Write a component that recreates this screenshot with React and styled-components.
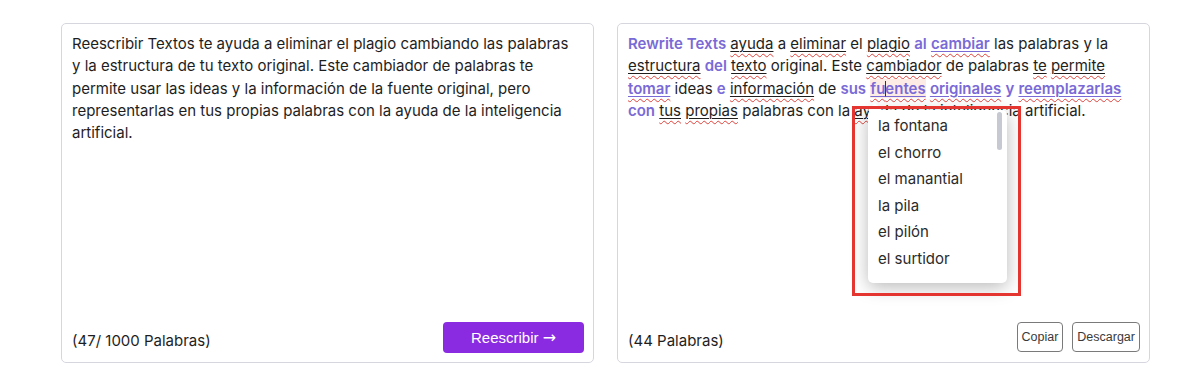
import styled, { createGlobalStyle } from "styled-components";

const GlobalStyle = createGlobalStyle`
  body {
    margin: 0;
    background: #fff;
    font-family: Inter, "Noto Sans", sans-serif;
  }
`;

const Page = styled.div`
  display: flex;
  gap: 23px;
  padding: 23px 48px 0 61px;
`;

const Panel = styled.div`
  position: relative;
  flex: 1;
  height: 340px;
  box-sizing: border-box;
  border: 1px solid #d6d6df;
  border-radius: 5px;
  display: flex;
  flex-direction: column;
  justify-content: space-between;
  padding: 9px 9px 9px 10px;
`;

const TextBody = styled.div`
  font-size: 15px;
  line-height: 22.3px;
  color: #1e1e1e;
  padding-right: 14px;
`;

const Footer = styled.div`
  display: flex;
  align-items: flex-end;
  justify-content: space-between;
`;

const Count = styled.span`
  font-size: 15px;
  line-height: 22px;
  color: #1e1e1e;
  padding-bottom: 1px;
`;

const RewriteButton = styled.button`
  width: 141px;
  height: 31px;
  border: none;
  border-radius: 4px;
  background: #8a2be2;
  color: #fff;
  font-family: "Liberation Sans", Arial, sans-serif;
  font-size: 15px;
`;

const Arrow = styled.span`
  font-family: "DejaVu Sans", sans-serif;
  font-size: 16px;
`;

const Actions = styled.div`
  display: flex;
  gap: 9px;
  padding-bottom: 1px;
`;

const GhostButton = styled.button`
  height: 30px;
  padding: 0 4px;
  background: #fff;
  border: 1px solid #7a7a7a;
  border-radius: 4px;
  color: #3a3a3a;
  font-family: "Liberation Sans", Arial, sans-serif;
  font-size: 12.5px;
`;

const Word = styled.span`
  color: ${(p) => (p.$purple ? "#7a6ad6" : "inherit")};
  font-weight: ${(p) => (p.$purple ? 600 : 400)};
  text-decoration: ${(p) => (p.$under ? "underline solid" : "none")};
  text-decoration-color: currentColor;
  text-underline-offset: 2px;
  text-decoration-thickness: 1px;
  background: ${(p) => (p.$mark ? "#fdebe6" : "transparent")};
`;

const Spell = styled.span`
  text-decoration: underline wavy #e0413a;
  text-decoration-thickness: 1px;
  text-underline-offset: 4px;
`;

const Caret = styled.span`
  display: inline-block;
  width: 1px;
  height: 16px;
  background: #333;
  vertical-align: -3px;
  margin: 0 -0.5px;
`;

const Popup = styled.div`
  position: absolute;
  left: 250px;
  top: 86px;
  width: 139px;
  height: 173px;
  background: #fff;
  border-radius: 5px;
  box-shadow: 0 4px 18px rgba(0, 0, 0, 0.28);
  padding-top: 3px;
  box-sizing: border-box;
  z-index: 2;
`;

const Notch = styled.div`
  position: absolute;
  left: 2px;
  top: -5px;
  width: 10px;
  height: 10px;
  background: #fff;
  transform: rotate(45deg);
`;

const Option = styled.div`
  position: relative;
  height: 26.5px;
  line-height: 26.5px;
  padding-left: 10px;
  font-size: 15px;
  color: #2b2b2b;
`;

const Thumb = styled.div`
  position: absolute;
  right: 5px;
  top: 2px;
  width: 5px;
  height: 38px;
  border-radius: 3px;
  background: #c6c8d2;
`;

const Annotation = styled.div`
  position: absolute;
  left: 234px;
  top: 82px;
  width: 169px;
  height: 190px;
  box-sizing: border-box;
  border: 3px solid #e53530;
  z-index: 3;
  pointer-events: none;
`;

const leftText =
  "Reescribir Textos te ayuda a eliminar el plagio cambiando las palabras y la estructura de tu texto original. Este cambiador de palabras te permite usar las ideas y la información de la fuente original, pero representarlas en tus propias palabras con la ayuda de la inteligencia artificial.";

// p = purple/bold, u = underlined, m = marked (caret)
const rightText = [
  ["Rewrite Texts", "p"], " ", ["ayuda", "u"], " a ", ["eliminar", "u"], " el ",
  ["plagio", "u"], " ", ["al", "p"], " ", ["cambiar", "pu"], " las palabras y la ",
  ["estructura", "u"], " ", ["del", "p"], " ", ["texto", "u"], " original. Este ",
  ["cambiador", "u"], " de palabras ", ["te", "u"], " ", ["permite", "u"], " ",
  ["tomar", "pu"], " ideas ", ["e", "p"], " ", ["información", "u"], " de ",
  ["sus", "p"], " ", ["fuentes", "pum"], " ", ["originales", "pu"], " ", ["y", "p"], " ",
  ["reemplazarlas", "pu"], " ", ["con", "p"], " ", ["tus", "u"], " ", ["propias", "u"],
  " palabras con la ", ["ayuda", "u"], " de la inteligencia artificial.",
];

const options = ["la fontana", "el chorro", "el manantial", "la pila", "el pilón", "el surtidor"];

const renderWord = (seg, i) => {
  if (typeof seg === "string") return <span key={i}>{seg}</span>;
  const [text, flags] = seg;
  const purple = flags.includes("p");
  const under = flags.includes("u");
  const mark = flags.includes("m");
  let inner = text;
  if (mark) {
    inner = (
      <>
        {text.slice(0, 2)}
        <Caret />
        {text.slice(2)}
      </>
    );
  }
  return (
    <Word key={i} $purple={purple} $under={under} $mark={mark}>
      {under ? <Spell>{inner}</Spell> : inner}
    </Word>
  );
};

const App = () => {
  return (
    <>
      <GlobalStyle />
      <Page>
        <Panel>
          <TextBody>{leftText}</TextBody>
          <Footer>
            <Count>(47/ 1000 Palabras)</Count>
            <RewriteButton>
              Reescribir <Arrow>→</Arrow>
            </RewriteButton>
          </Footer>
        </Panel>
        <Panel>
          <TextBody>{rightText.map(renderWord)}</TextBody>
          <Footer>
            <Count>(44 Palabras)</Count>
            <Actions>
              <GhostButton>Copiar</GhostButton>
              <GhostButton>Descargar</GhostButton>
            </Actions>
          </Footer>
          <Popup>
            <Notch />
            <Thumb />
            {options.map((o) => (
              <Option key={o}>{o}</Option>
            ))}
          </Popup>
          <Annotation />
        </Panel>
      </Page>
    </>
  );
};

export default App;
